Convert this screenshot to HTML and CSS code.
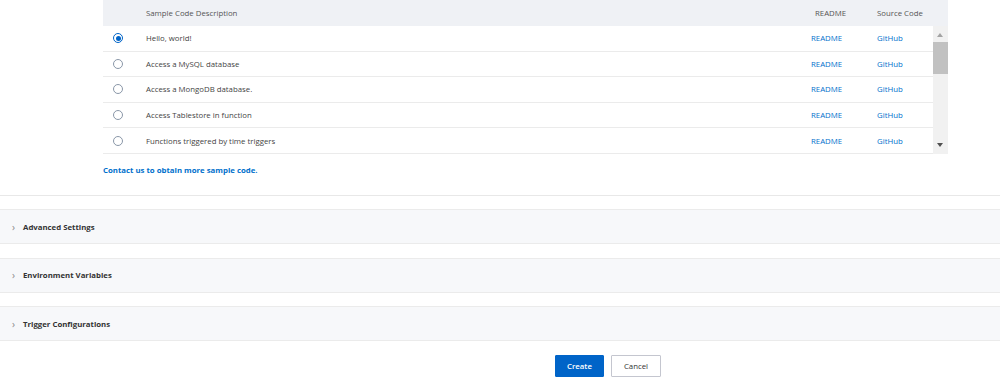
FILE: index.html
```html
<!DOCTYPE html>
<html>
<head>
  <title>Create Function</title>
  <meta charset="UTF-8">
  <link rel="stylesheet" href="styles.css">
</head>
<body>
  <div class="samples">
    <div class="sample-table">
      <div class="table-head">
        <div class="col-radio"></div>
        <div class="col-desc">Sample Code Description</div>
        <div class="col-readme">README</div>
        <div class="col-source">Source Code</div>
      </div>
      <div class="table-body">
        <div class="rows">
          <div class="row">
            <div class="col-radio"><span class="radio checked"></span></div>
            <div class="col-desc">Hello, world!</div>
            <div class="col-readme"><a href="#">README</a></div>
            <div class="col-source"><a href="#">GitHub</a></div>
          </div>
          <div class="row">
            <div class="col-radio"><span class="radio"></span></div>
            <div class="col-desc">Access a MySQL database</div>
            <div class="col-readme"><a href="#">README</a></div>
            <div class="col-source"><a href="#">GitHub</a></div>
          </div>
          <div class="row">
            <div class="col-radio"><span class="radio"></span></div>
            <div class="col-desc">Access a MongoDB database.</div>
            <div class="col-readme"><a href="#">README</a></div>
            <div class="col-source"><a href="#">GitHub</a></div>
          </div>
          <div class="row">
            <div class="col-radio"><span class="radio"></span></div>
            <div class="col-desc">Access Tablestore in function</div>
            <div class="col-readme"><a href="#">README</a></div>
            <div class="col-source"><a href="#">GitHub</a></div>
          </div>
          <div class="row">
            <div class="col-radio"><span class="radio"></span></div>
            <div class="col-desc">Functions triggered by time triggers</div>
            <div class="col-readme"><a href="#">README</a></div>
            <div class="col-source"><a href="#">GitHub</a></div>
          </div>
        </div>
        <div class="scrollbar">
          <div class="arrow-up"></div>
          <div class="thumb"></div>
          <div class="track"></div>
          <div class="arrow-down"></div>
        </div>
      </div>
    </div>
    <a class="contact" href="#">Contact us to obtain more sample code.</a>
  </div>

  <div class="panel">
    <span class="chevron">&#8250;</span>
    <span class="panel-title">Advanced Settings</span>
  </div>
  <div class="panel">
    <span class="chevron">&#8250;</span>
    <span class="panel-title">Environment Variables</span>
  </div>
  <div class="panel">
    <span class="chevron">&#8250;</span>
    <span class="panel-title">Trigger Configurations</span>
  </div>

  <div class="actions">
    <button type="button" class="button primary">Create</button>
    <button type="button" class="button">Cancel</button>
  </div>
</body>
</html>
```

FILE: styles.css
```css
body {
  font-family: 'Open Sans', sans-serif;
  font-size: 7.8px;
  color: #444;
  margin: 0;
  padding: 0;
  background-color: #fff;
}
a {
  color: #0070cc;
  text-decoration: none;
}
.samples {
  padding: 0 52px 20px 103px;
  border-bottom: 1px solid #e8e8e8;
}
.sample-table {
  width: 845px;
}
.table-head {
  display: flex;
  align-items: center;
  height: 26px;
  background-color: #eff1f5;
  color: #555;
}
.table-body {
  display: flex;
}
.rows {
  flex: 1;
}
.row {
  display: flex;
  align-items: center;
  height: 24.6px;
  border-bottom: 1px solid #ebebeb;
}
.col-radio {
  width: 33px;
  padding-left: 10px;
  display: flex;
  align-items: center;
}
.col-desc {
  flex: 1;
}
.col-readme {
  width: 66px;
}
.col-source {
  width: 71px;
}
.table-head .col-readme {
  margin-left: 4px;
  width: 62px;
}
.rows .col-source {
  width: 56px;
}
.radio {
  width: 10px;
  height: 10px;
  border: 1px solid #8a97a8;
  border-radius: 50%;
  box-sizing: border-box;
  display: inline-block;
  position: relative;
}
.radio.checked {
  border-color: #0064c8;
}
.radio.checked::after {
  content: "";
  position: absolute;
  top: 1.5px;
  left: 1.5px;
  width: 5px;
  height: 5px;
  border-radius: 50%;
  background-color: #0064c8;
}
.scrollbar {
  width: 15px;
  background-color: #f1f1f1;
  display: flex;
  flex-direction: column;
  align-items: center;
}
.arrow-up, .arrow-down {
  height: 16px;
  width: 15px;
  position: relative;
}
.arrow-up::after, .arrow-down::after {
  content: "";
  position: absolute;
  left: 4px;
  border-left: 3.5px solid transparent;
  border-right: 3.5px solid transparent;
}
.arrow-up::after {
  top: 7px;
  border-bottom: 4px solid #a3a3a3;
}
.arrow-down::after {
  top: 5px;
  border-top: 4px solid #505050;
}
.thumb {
  width: 15px;
  height: 32px;
  background-color: #c1c1c1;
}
.track {
  flex: 1;
}
.contact {
  display: block;
  margin-top: 11px;
  font-weight: 700;
}
.panel {
  display: flex;
  align-items: center;
  height: 33px;
  margin-top: 13.5px;
  background-color: #f7f8fa;
  border-top: 1px solid #ebebeb;
  border-bottom: 1px solid #ebebeb;
}
.chevron {
  width: 10px;
  margin-left: 12px;
  color: #888;
  font-size: 10px;
}
.panel-title {
  margin-left: 1px;
  font-weight: 700;
  color: #333;
}
.actions {
  display: flex;
  justify-content: center;
  gap: 7px;
  padding: 14px 0 0 216px;
}
.button {
  font-family: 'Open Sans', sans-serif;
  font-size: 7.8px;
  height: 22px;
  width: 50px;
  padding: 0;
  background-color: #fff;
  color: #333;
  border: 1px solid #c4c6cf;
  border-radius: 1px;
  cursor: pointer;
}
.button.primary {
  width: 49px;
  background-color: #0064c8;
  border-color: #0064c8;
  color: #fff;
  font-weight: 600;
}
```
